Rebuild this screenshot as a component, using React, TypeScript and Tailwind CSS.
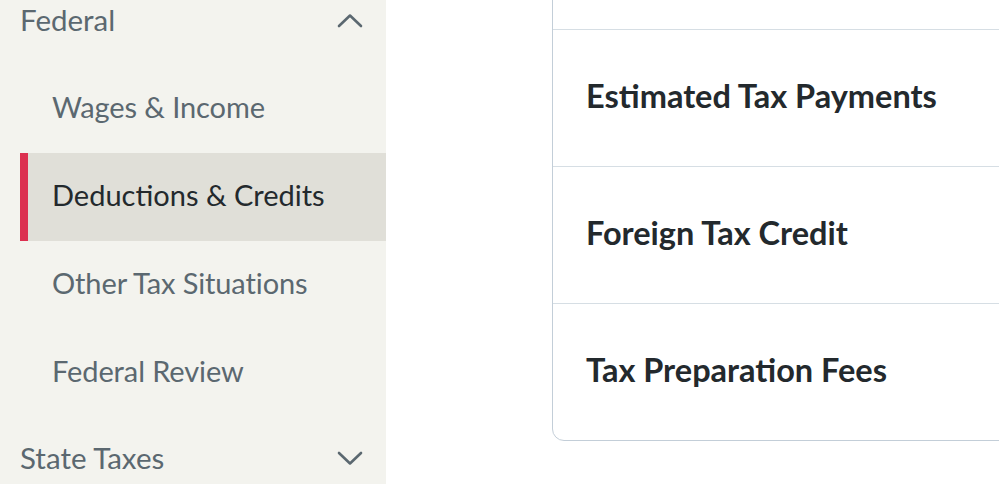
import React from 'react';

const navItems = [
  { label: 'Wages & Income', active: false },
  { label: 'Deductions & Credits', active: true },
  { label: 'Other Tax Situations', active: false },
  { label: 'Federal Review', active: false },
];

// first row is scrolled above the viewport
const topics = ['', 'Estimated Tax Payments', 'Foreign Tax Credit', 'Tax Preparation Fees'];

const Chevron: React.FC<{ up?: boolean }> = ({ up }) => (
  <svg width="26" height="15" viewBox="0 0 26 15" fill="none" className="text-[#5b6870]">
    <path
      d={up ? 'M2 13L13 2.5L24 13' : 'M2 2L13 12.5L24 2'}
      stroke="currentColor"
      strokeWidth="2.6"
      strokeLinecap="round"
      strokeLinejoin="round"
    />
  </svg>
);

const SectionHeader: React.FC<{ title: string; open?: boolean }> = ({ title, open }) => (
  <div className="h-10 flex items-center justify-between pl-5 pr-[23px]">
    <span className="text-[29.5px] text-[#5b6870]">{title}</span>
    <Chevron up={open} />
  </div>
);

const App: React.FC = () => {
  return (
    <div
      className="flex h-[484px] w-full overflow-hidden bg-white"
      style={{ fontFamily: 'Lato, "Noto Sans", sans-serif' }}
    >
      {/* Sidebar */}
      <aside className="w-[386px] shrink-0 bg-[#f3f3ee]">
        <SectionHeader title="Federal" open />
        <ul className="pt-[25px]">
          {navItems.map((item) => (
            <li
              key={item.label}
              className={
                item.active
                  ? 'ml-5 h-[88px] flex items-center bg-[#e0dfd8] border-l-[8px] border-[#dc3050] pl-6 pb-[5px] text-[29px] text-[#23292d]'
                  : 'ml-5 h-[88px] flex items-center pl-8 pb-[5px] text-[29px] tracking-[-0.1px] text-[#5b6870]'
              }
            >
              {item.label}
            </li>
          ))}
        </ul>
        <div className="mt-[21px]">
          <SectionHeader title="State Taxes" />
        </div>
      </aside>

      {/* Main */}
      <main className="flex-1 overflow-hidden pl-[166px]">
        <div className="-mt-[108px] w-[700px] rounded-[12px] border border-[#c3ced8] bg-white">
          {topics.map((t, i) => (
            <div
              key={i}
              className={
                i === 0
                  ? 'h-[136px]'
                  : 'h-[137px] flex items-center pl-[33px] pb-[3px] border-t border-[#d6dee4] text-[32.5px] font-bold text-[#23292d]'
              }
            >
              {t}
            </div>
          ))}
        </div>
      </main>
    </div>
  );
};

export default App;
